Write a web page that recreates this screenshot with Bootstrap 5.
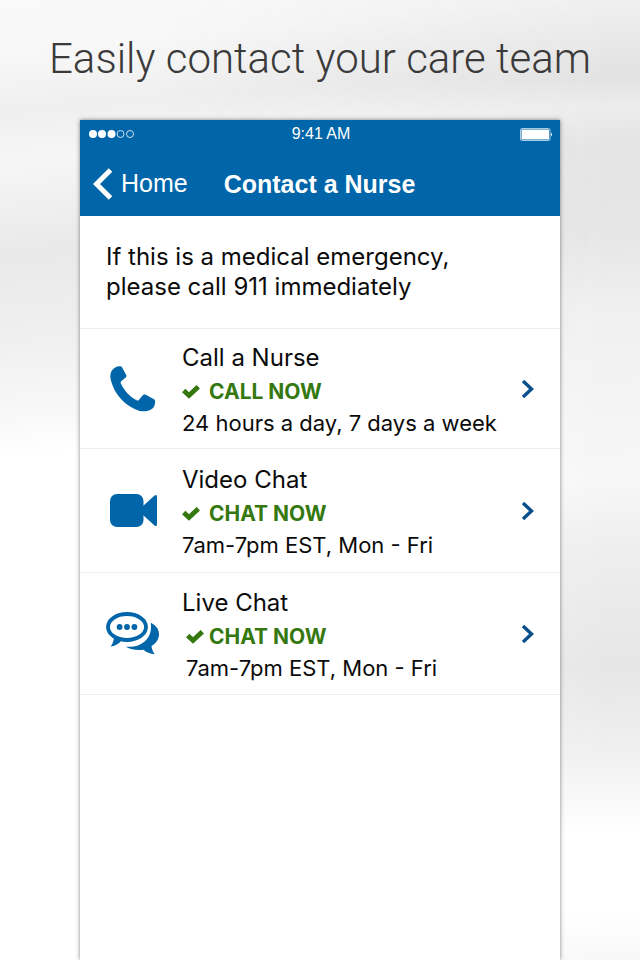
<!DOCTYPE html>
<html lang="en">
<head>
<meta charset="utf-8">
<meta name="viewport" content="width=device-width, initial-scale=1">
<title>Contact a Nurse</title>
<link href="https://cdn.jsdelivr.net/npm/bootstrap@5.3.0/dist/css/bootstrap.min.css" rel="stylesheet">
<style>
  :root { --brand: #0065a9; --ok: #35780f; --arrow: #084f8c; }
  body {
    font-family: Inter, "Liberation Sans", sans-serif;
    color: #0b0b0b;
    background: linear-gradient(175deg, #f9f9f9 0%, #f8f8f8 5%, #efefef 11%, #f6f6f6 16%, #e9e9e9 25%, #efefef 33%, #f8f8f8 41%, #fff 45%, #fff 100%);
  }
  /* second cloud layer, fading in towards the right edge */
  body::before {
    content: ""; position: absolute; inset: 0; z-index: -1;
    background: linear-gradient(178deg, #f3f3f3 0%, #e2e2e2 10%, #ececec 13%, #e4e4e4 17%, #e6e6e6 26%, #f0f0f0 34%, #f7f7f7 51%, #eeeeee 58%, #e6e6e6 70%, #f0f0f0 79%, #fff 87%, #fff 95%, #f8f8f8 100%);
    -webkit-mask-image: linear-gradient(to right, transparent 25%, #000 95%);
    mask-image: linear-gradient(to right, transparent 25%, #000 95%);
  }
  .headline { font: 300 42px/52px Roboto, "Liberation Sans", sans-serif; color: #3a3a3a; padding: 33px 0 35px; }
  .phone { width: 75%; box-shadow: 0 0 4px rgba(0,0,0,.5); }
  .topbar { background: var(--brand); font-family: "Liberation Sans", sans-serif; }
  .status { height: 28px; padding: 0 7px 0 9px; font-size: 16px; line-height: 28px; }
  .title-row { height: 68px; padding: 4px 13px 0; font-size: 25px; }
  .page-title { font-size: 25px; margin-left: 36px; }
  .notice { font-size: 24px; line-height: 30px; padding: 26px; }
  .line { border-bottom: 1px solid #ececec; }
  .choice { color: inherit; padding: 0 26px; min-height: 122px; }
  .choice-first { min-height: 120px; }
  .choice-second { min-height: 124px; }
  .choice:hover { background: #f7fafc; }
  .picto { width: 76px; color: var(--brand); }
  .name { font-size: 24px; line-height: 36px; }
  .now { font-size: 21px; line-height: 32px; color: var(--ok); }
  .tick { width: 27px; }
  .hours { font-size: 22px; line-height: 30px; }
  .arrow { color: var(--arrow); }
</style>
</head>
<body class="position-relative z-0 min-vh-100 d-flex flex-column align-items-center overflow-x-hidden">
<h1 class="headline text-center m-0">Easily contact your care team</h1>
<main class="phone bg-white flex-grow-1">
  <header class="topbar text-white">
    <div class="status row g-0">
      <div class="col d-flex align-items-center"><svg width="46" height="10" viewBox="0 0 46 10" fill="#fff" role="img" aria-label="Signal"><circle cx="4" cy="5" r="4"/><circle cx="13" cy="5" r="4"/><circle cx="22.500" cy="5" r="4"/><g fill="none" stroke="#fff" stroke-width=".8"><circle cx="31.500" cy="5" r="3.500"/><circle cx="41" cy="5" r="3.500"/></g></svg></div>
      <div class="col-auto">9:41 AM</div>
      <div class="col d-flex align-items-center justify-content-end"><svg width="33" height="13" viewBox="0 0 33 13" role="img" aria-label="Battery"><rect x=".5" y=".5" width="29.500" height="12" rx="1.500" fill="none" stroke="#a8cbe3"/><rect x="1.500" y="1.500" width="27.500" height="10" rx=".6" fill="#fff"/><path d="M31 4.500q2 2 0 4z" fill="#fff"/></svg></div>
    </div>
    <nav class="title-row d-flex align-items-center">
      <a href="#" class="d-flex align-items-center gap-2 text-white text-decoration-none">
        <svg width="20" height="32" viewBox="0 0 20 32" fill="none" stroke="#fff" stroke-width="5" aria-hidden="true"><path d="M17.500 2 3.500 16l14 14"/></svg>Home</a>
      <h2 class="page-title fw-bold mb-0">Contact a Nurse</h2>
    </nav>
  </header>
  <p class="notice line m-0">If this is a medical emergency,<br>please call 911 immediately</p>
  <a href="#" class="choice choice-first line d-flex align-items-center text-decoration-none">
    <span class="picto"><svg class="ms-1" width="46" height="46" viewBox="0 0 46 46" fill="currentColor" aria-hidden="true"><path d="M6 1Q8-.2 10.500.3 11.500.5 12 1.300L16.200 9Q17 10.400 15.700 11.400L11 15.500Q10.300 16.200 10.800 17.300C14 24.500 20 31 26.500 34.200 28 34.800 28.300 34.600 28.800 34L33 29Q34 28 35.300 28.600L44 33.200Q45.300 34 45.200 35.500L44.800 38.500Q44 43.500 36 45.200C32 45.800 28 44.800 24 42.800 12 36.500 4 26.500.8 14-.5 8 .8 3.500 6 1Z"/></svg></span>
    <span class="flex-grow-1">
      <span class="name d-block">Call a Nurse</span>
      <span class="now fw-bold d-flex align-items-center"><span class="tick d-flex"><svg width="18" height="14" viewBox="0 0 18 14" fill="none" stroke="currentColor" stroke-width="4.800" aria-hidden="true"><path d="m1.700 5.500 5.300 5 9.300-8.800"/></svg></span>CALL NOW</span>
      <span class="hours d-block">24 hours a day, 7 days a week</span>
    </span>
    <svg class="arrow" width="13" height="18" viewBox="0 0 13 18" fill="none" stroke="currentColor" stroke-width="3.400" aria-hidden="true"><path d="m2 1 8.500 8L2 17"/></svg>
  </a>
  <a href="#" class="choice choice-second line d-flex align-items-center text-decoration-none">
    <span class="picto"><svg class="ms-1" width="47" height="33" viewBox="0 0 47 33" fill="currentColor" aria-hidden="true"><rect width="33.500" height="33" rx="7"/><path d="M33 12 44.500 1.500Q47 0 47 2.500v28q0 2.500-2.500 1L33 21z"/></svg></span>
    <span class="flex-grow-1">
      <span class="name d-block">Video Chat</span>
      <span class="now fw-bold d-flex align-items-center"><span class="tick d-flex"><svg width="18" height="14" viewBox="0 0 18 14" fill="none" stroke="currentColor" stroke-width="4.800" aria-hidden="true"><path d="m1.700 5.500 5.300 5 9.300-8.800"/></svg></span>CHAT NOW</span>
      <span class="hours d-block">7am-7pm EST, Mon - Fri</span>
    </span>
    <svg class="arrow" width="13" height="18" viewBox="0 0 13 18" fill="none" stroke="currentColor" stroke-width="3.400" aria-hidden="true"><path d="m2 1 8.500 8L2 17"/></svg>
  </a>
  <a href="#" class="choice line d-flex align-items-center text-decoration-none">
    <span class="picto"><svg width="54" height="43" viewBox="0 0 54 43" fill="currentColor" aria-hidden="true"><path d="M44.700 10.800C51 14 53 18 53 22.500 53 27 50 31.500 45.500 34 45.800 37 47 40 48.800 42.200 44 42 40 40 37.500 37.700 31 38.500 25 37.500 19.700 34.700 26 35 30 34.500 33.500 32.700 41 29.500 46.500 22 44.700 10.800Z"/><path d="M8 24.500Q7.700 31 4.500 34.500 11 34 15.500 28.500z"/><ellipse cx="21" cy="15" rx="19" ry="13" fill="#fff" stroke="currentColor" stroke-width="3.800"/><circle cx="13.600" cy="15" r="2.900"/><circle cx="21" cy="15" r="2.900"/><circle cx="28.400" cy="15" r="2.900"/></svg></span>
    <span class="flex-grow-1">
      <span class="name d-block">Live Chat</span>
      <span class="now fw-bold d-flex align-items-center"><span class="tick d-flex ps-1"><svg width="18" height="14" viewBox="0 0 18 14" fill="none" stroke="currentColor" stroke-width="4.800" aria-hidden="true"><path d="m1.700 5.500 5.300 5 9.300-8.800"/></svg></span>CHAT NOW</span>
      <span class="hours d-block ps-1">7am-7pm EST, Mon - Fri</span>
    </span>
    <svg class="arrow" width="13" height="18" viewBox="0 0 13 18" fill="none" stroke="currentColor" stroke-width="3.400" aria-hidden="true"><path d="m2 1 8.500 8L2 17"/></svg>
  </a>
</main>
<script src="https://cdn.jsdelivr.net/npm/bootstrap@5.3.0/dist/js/bootstrap.bundle.min.js"></script>
</body>
</html>
